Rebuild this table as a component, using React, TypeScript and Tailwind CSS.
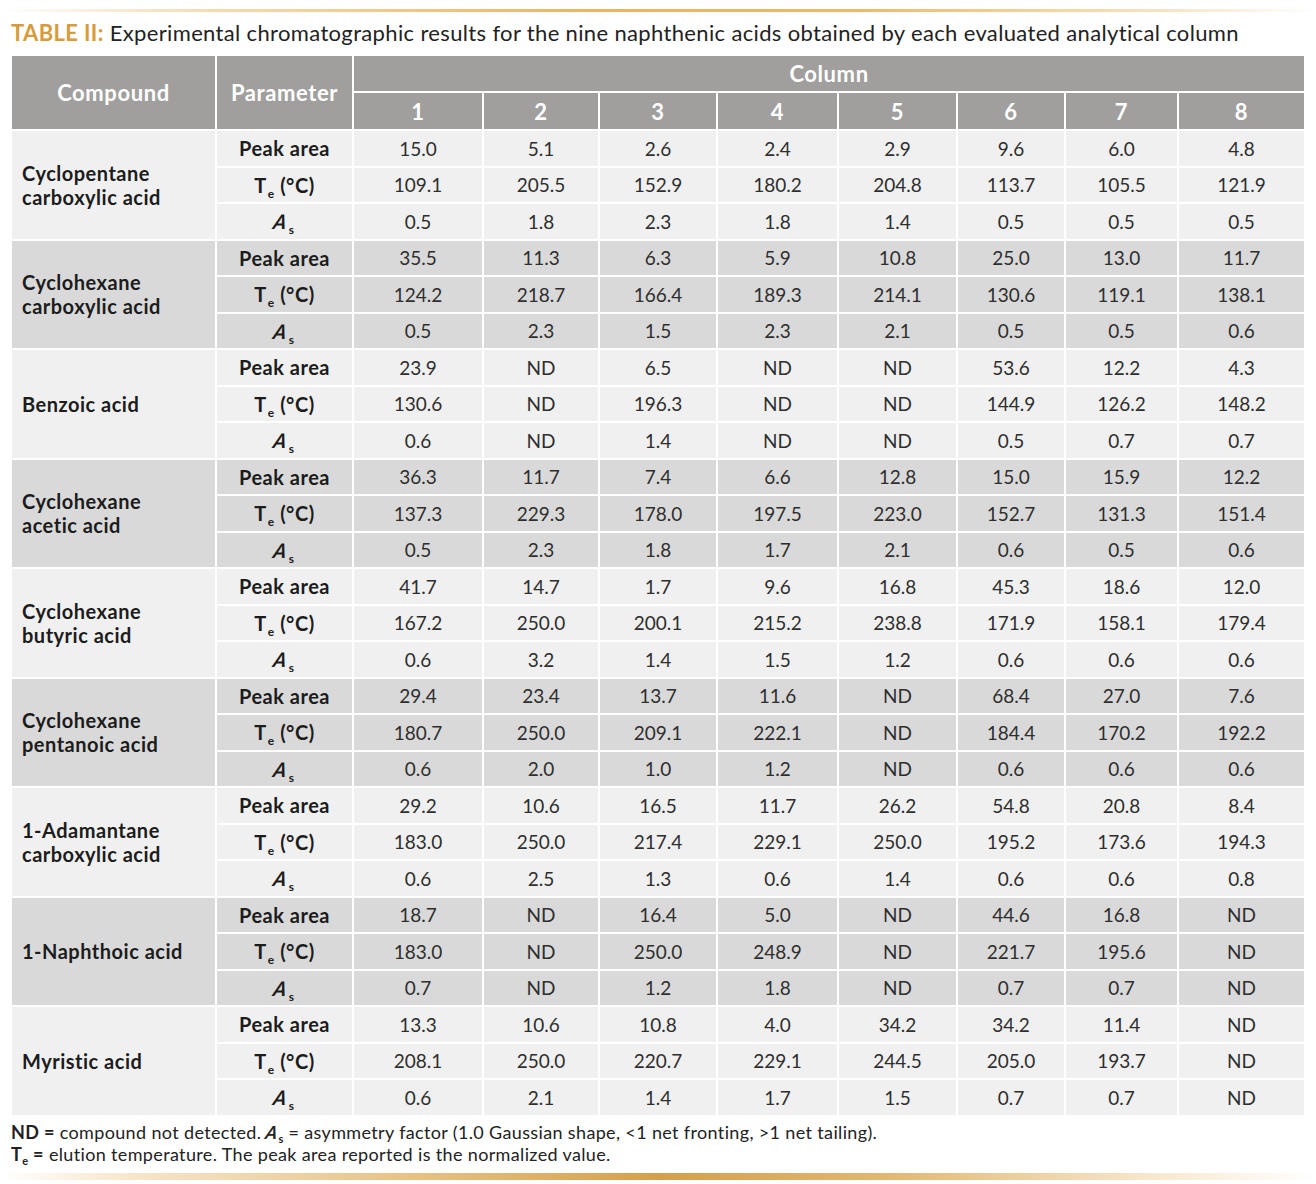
import React from "react";

type Group = { name: string[]; peak: string[]; te: string[]; as: string[] };

const groups: Group[] = [
  {
    name: ["Cyclopentane", "carboxylic acid"],
    peak: ["15.0", "5.1", "2.6", "2.4", "2.9", "9.6", "6.0", "4.8"],
    te: ["109.1", "205.5", "152.9", "180.2", "204.8", "113.7", "105.5", "121.9"],
    as: ["0.5", "1.8", "2.3", "1.8", "1.4", "0.5", "0.5", "0.5"],
  },
  {
    name: ["Cyclohexane", "carboxylic acid"],
    peak: ["35.5", "11.3", "6.3", "5.9", "10.8", "25.0", "13.0", "11.7"],
    te: ["124.2", "218.7", "166.4", "189.3", "214.1", "130.6", "119.1", "138.1"],
    as: ["0.5", "2.3", "1.5", "2.3", "2.1", "0.5", "0.5", "0.6"],
  },
  {
    name: ["Benzoic acid"],
    peak: ["23.9", "ND", "6.5", "ND", "ND", "53.6", "12.2", "4.3"],
    te: ["130.6", "ND", "196.3", "ND", "ND", "144.9", "126.2", "148.2"],
    as: ["0.6", "ND", "1.4", "ND", "ND", "0.5", "0.7", "0.7"],
  },
  {
    name: ["Cyclohexane", "acetic acid"],
    peak: ["36.3", "11.7", "7.4", "6.6", "12.8", "15.0", "15.9", "12.2"],
    te: ["137.3", "229.3", "178.0", "197.5", "223.0", "152.7", "131.3", "151.4"],
    as: ["0.5", "2.3", "1.8", "1.7", "2.1", "0.6", "0.5", "0.6"],
  },
  {
    name: ["Cyclohexane", "butyric acid"],
    peak: ["41.7", "14.7", "1.7", "9.6", "16.8", "45.3", "18.6", "12.0"],
    te: ["167.2", "250.0", "200.1", "215.2", "238.8", "171.9", "158.1", "179.4"],
    as: ["0.6", "3.2", "1.4", "1.5", "1.2", "0.6", "0.6", "0.6"],
  },
  {
    name: ["Cyclohexane", "pentanoic acid"],
    peak: ["29.4", "23.4", "13.7", "11.6", "ND", "68.4", "27.0", "7.6"],
    te: ["180.7", "250.0", "209.1", "222.1", "ND", "184.4", "170.2", "192.2"],
    as: ["0.6", "2.0", "1.0", "1.2", "ND", "0.6", "0.6", "0.6"],
  },
  {
    name: ["1-Adamantane", "carboxylic acid"],
    peak: ["29.2", "10.6", "16.5", "11.7", "26.2", "54.8", "20.8", "8.4"],
    te: ["183.0", "250.0", "217.4", "229.1", "250.0", "195.2", "173.6", "194.3"],
    as: ["0.6", "2.5", "1.3", "0.6", "1.4", "0.6", "0.6", "0.8"],
  },
  {
    name: ["1-Naphthoic acid"],
    peak: ["18.7", "ND", "16.4", "5.0", "ND", "44.6", "16.8", "ND"],
    te: ["183.0", "ND", "250.0", "248.9", "ND", "221.7", "195.6", "ND"],
    as: ["0.7", "ND", "1.2", "1.8", "ND", "0.7", "0.7", "ND"],
  },
  {
    name: ["Myristic acid"],
    peak: ["13.3", "10.6", "10.8", "4.0", "34.2", "34.2", "11.4", "ND"],
    te: ["208.1", "250.0", "220.7", "229.1", "244.5", "205.0", "193.7", "ND"],
    as: ["0.6", "2.1", "1.4", "1.7", "1.5", "0.7", "0.7", "ND"],
  },
];

const colWidths = [205, 137, 130, 116, 118, 121, 119, 108, 113, 127];

const Te = () => (
  <span>
    T<span className="text-[12px] leading-none relative top-[5px] ml-[1px]">e</span> (°C)
  </span>
);
const As = () => (
  <span>
    <i className="inline-block -skew-x-12">A</i>
    <span className="text-[12px] leading-none relative top-[5px] ml-[1px]">s</span>
  </span>
);

const headCls =
  "bg-[#a09f9e] border-2 border-white text-white text-[22px] font-bold text-center tracking-[0.6px]";

export default function App() {
  return (
    <div
      className="w-[1316px] h-[1184px] bg-white overflow-hidden"
      style={{ fontFamily: "Lato, 'Noto Sans', sans-serif" }}
    >
      <div className="pt-[9px]">
        <div className="h-[3px] w-[1316px] bg-[linear-gradient(90deg,rgba(255,255,255,0)_0%,#f5dcb4_15%,#ecb45c_45%,#eeb965_65%,#f7e2c0_88%,rgba(255,255,255,0)_100%)]" />
      </div>
      <div className="pl-[11px] mt-[5px] h-[32px] text-[22px] leading-[32px] text-[#222] tracking-[0.35px] whitespace-nowrap">
        <span className="font-bold text-[#d79b3a]">TABLE II:</span> Experimental chromatographic
        results for the nine naphthenic acids obtained by each evaluated analytical column
      </div>
      <div className="pl-[10px] mt-[5px]">
        <table className="table-fixed border-collapse w-[1296px]">
          <colgroup>
            {colWidths.map((w, i) => (
              <col key={i} style={{ width: w }} />
            ))}
          </colgroup>
          <thead>
            <tr className="h-[37px]">
              <th rowSpan={2} className={headCls}>
                Compound
              </th>
              <th rowSpan={2} className={headCls}>
                Parameter
              </th>
              <th colSpan={8} className={headCls}>
                Column
              </th>
            </tr>
            <tr className="h-[38px]">
              {[1, 2, 3, 4, 5, 6, 7, 8].map((n) => (
                <th key={n} className={headCls}>
                  {n}
                </th>
              ))}
            </tr>
          </thead>
          <tbody>
            {groups.map((g, gi) => {
              const bg = gi % 2 === 0 ? "bg-[#f0f0f0]" : "bg-[#d9d9d9]";
              const rows: { label: React.ReactNode; vals: string[] }[] = [
                { label: "Peak area", vals: g.peak },
                { label: <Te />, vals: g.te },
                { label: <As />, vals: g.as },
              ];
              return rows.map((r, ri) => (
                <tr key={`${gi}-${ri}`} className="h-[36.5px]">
                  {ri === 0 && (
                    <td
                      rowSpan={3}
                      className={`${bg} border-2 border-white pl-[10px] text-[20px] leading-[24px] font-bold text-[#1c1c1c] tracking-[0.5px]`}
                    >
                      {g.name.map((l, k) => (
                        <div key={k}>{l}</div>
                      ))}
                    </td>
                  )}
                  <td
                    className={`${bg} border-2 border-white text-center text-[20px] font-bold text-[#1c1c1c] tracking-[0.5px] leading-none`}
                  >
                    {r.label}
                  </td>
                  {r.vals.map((v, vi) => (
                    <td
                      key={vi}
                      className={`${bg} border-2 border-white text-center text-[19px] text-[#2e2e2e] leading-none`}
                    >
                      {v}
                    </td>
                  ))}
                </tr>
              ));
            })}
          </tbody>
        </table>
      </div>
      <div className="pl-[11px] mt-[4px] text-[18px] text-[#222] tracking-[0.35px] whitespace-nowrap">
        <div className="h-[22px] leading-[22px]">
          <b>ND =</b> compound not detected.{" "}
          <b>
            <i className="inline-block -skew-x-12">A</i>
            <span className="text-[11px] leading-none relative top-[4px]">s</span>
          </b>{" "}
          = asymmetry factor (1.0 Gaussian shape, &lt;1 net fronting, &gt;1 net tailing).
        </div>
        <div className="h-[22px] leading-[22px]">
          <b>
            T<span className="text-[11px] leading-none relative top-[4px]">e</span> =
          </b>{" "}
          elution temperature. The peak area reported is the normalized value.
        </div>
      </div>
      <div className="mt-[8px] h-[7px] w-[1316px] bg-[linear-gradient(90deg,rgba(255,255,255,0)_0%,#f6e3c4_10%,#e2b36a_35%,#cf9534_50%,#e0b064_68%,#f7e6c9_88%,rgba(255,255,255,0)_100%)] opacity-90" />
    </div>
  );
}
